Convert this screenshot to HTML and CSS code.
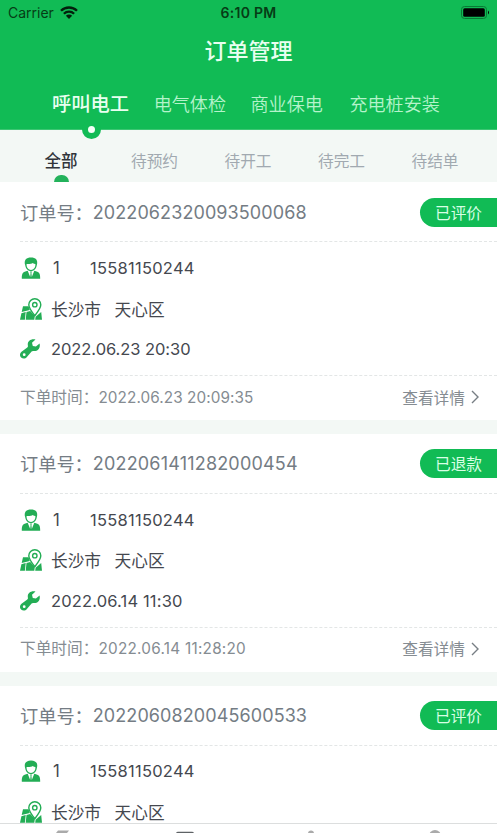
FILE: index.html
```html
<!DOCTYPE html>
<html lang="zh-CN">
<head>
<meta charset="utf-8">
<title>订单管理</title>
<link rel="stylesheet" href="styles.css">
</head>
<body>
<svg class="defs" aria-hidden="true">
  <symbol id="person" viewBox="0 0 20 22">
    <path d="M4.200 8.200C2.600 2.800 5.500.400 10 .400s7.400 2.400 5.800 7.800C15.300 12 12.700 14 10 14S4.700 12 4.200 8.200Z"/>
    <path class="hole" d="M5.600 7c2.800.200 5.200-.300 6.200-1 .6.500 1.500.900 2.600 1 .3 3.700-1.900 5.900-4.400 5.900S5.300 10.700 5.600 7Z"/>
    <path d="M.800 21.700c0-5.700 1-6.600 5.900-7.900L9.200 20l.4-4.300-.6-1.200h2l-.6 1.200.4 4.300 2.500-6.200c4.900 1.300 5.900 2.200 5.900 7.900Z"/>
  </symbol>
  <symbol id="map" viewBox="0 0 22 22">
    <path d="M3 8.200h5.500l1.300 3.800-8.100 2.100ZM1.400 15.200l4.300-1.100-.8 7.700H0ZM6.500 13.900l3.700-1 4.600 5.200-.5 3.700H5.700ZM15.600 18.700l5.600-4.700.8 7.800h-6.800Z"/>
    <path class="pin" d="M14.800 17.700C11.500 13.500 8.800 10.200 8.800 6.800a6 6 0 0 1 12 0c0 3.400-2.700 6.700-6 10.900Z"/>
    <circle class="pin" cx="14.800" cy="6.700" r="2.200"/>
  </symbol>
  <symbol id="wrench" viewBox="0 0 20 20">
    <path fill-rule="evenodd" d="M15.500.5C10.500-.6 7 2.600 7.900 6.700c.2.800 0 1.200-.6 1.700L1.500 12.800c-1.900 1.500-2 4.100-.4 5.700s4.300 1.500 5.800-.4l4.700-5.500c.5-.6 1-.8 1.800-.7 4.300.6 7.200-2.600 6.200-7.300l-3.700 3-3.100-.7-.8-3.200ZM4.200 14.300a1.400 1.400 0 1 1 0 2.800 1.400 1.400 0 0 1 0-2.800Z"/>
  </symbol>
</svg>
<div class="app">
  <header class="top">
    <div class="status">
      <span class="carrier">Carrier</span>
      <svg class="wifi" viewBox="0 0 18 13"><path d="M1 4.800a11.300 11.300 0 0 1 16 0M3.900 7.700a7.200 7.200 0 0 1 10.200 0"/><path class="dot" d="M5.900 9.800a4.400 4.400 0 0 1 6.200 0L9 13Z"/></svg>
      <span class="clock">6:10 PM</span>
      <svg class="battery" viewBox="0 0 29 13"><rect class="shell" x=".5" y=".5" width="25" height="12" rx="3"/><rect x="2.200" y="2.200" width="21.600" height="8.600" rx="1.500"/><path d="M27 4.500q2 2 0 4Z"/></svg>
    </div>
    <h1>订单管理</h1>
    <nav class="kinds"><span class="on">呼叫电工</span><span>电气体检</span><span>商业保电</span><span>充电桩安装</span></nav>
  </header>
  <nav class="states"><span class="on">全部</span><span>待预约</span><span>待开工</span><span>待完工</span><span>待结单</span></nav>
  <main>
    <article class="card">
      <div class="head"><span class="label">订单号：</span><span class="no">2022062320093500068</span><span class="badge">已评价</span></div>
      <div class="info">
        <div class="row"><svg><use href="#person"/></svg><span class="who">1</span><span class="num">15581150244</span></div>
        <div class="row"><svg><use href="#map"/></svg><span class="city">长沙市</span><span>天心区</span></div>
        <div class="row"><svg class="tool"><use href="#wrench"/></svg><span class="num tight">2022.06.23 20:30</span></div>
      </div>
      <div class="foot"><span class="label">下单时间：</span><span class="time">2022.06.23 20:09:35</span><span class="more">查看详情</span><svg viewBox="0 0 8 14"><path d="m1 1 6 6-6 6"/></svg></div>
    </article>
    <article class="card">
      <div class="head"><span class="label">订单号：</span><span class="no wide">2022061411282000454</span><span class="badge">已退款</span></div>
      <div class="info">
        <div class="row"><svg><use href="#person"/></svg><span class="who">1</span><span class="num">15581150244</span></div>
        <div class="row"><svg><use href="#map"/></svg><span class="city">长沙市</span><span>天心区</span></div>
        <div class="row"><svg class="tool"><use href="#wrench"/></svg><span class="num">2022.06.14 11:30</span></div>
      </div>
      <div class="foot"><span class="label">下单时间：</span><span class="time wide">2022.06.14 11:28:20</span><span class="more">查看详情</span><svg viewBox="0 0 8 14"><path d="m1 1 6 6-6 6"/></svg></div>
    </article>
    <article class="card">
      <div class="head"><span class="label">订单号：</span><span class="no">2022060820045600533</span><span class="badge">已评价</span></div>
      <div class="info">
        <div class="row"><svg><use href="#person"/></svg><span class="who">1</span><span class="num">15581150244</span></div>
        <div class="row"><svg><use href="#map"/></svg><span class="city">长沙市</span><span>天心区</span></div>
      </div>
    </article>
  </main>
  <footer class="tabbar">
    <svg viewBox="0 0 20 9"><path d="M6 6.500h11L15 9H4Z"/></svg>
    <svg class="current" viewBox="0 0 20 9"><rect x="1" y="7.800" width="18" height="8" rx="2"/></svg>
    <svg viewBox="0 0 20 9"><circle cx="10" cy="9.500" r="3"/></svg>
    <svg viewBox="0 0 20 9"><circle cx="10" cy="12" r="6"/></svg>
  </footer>
</div>
</body>
</html>
```
FILE: styles.css
```css
*, *::after { box-sizing: border-box; }
body { margin: 0; font-family: Inter, "Noto Sans CJK SC", sans-serif; color: #45484f; background: #fff; }
.defs { position: absolute; width: 0; height: 0; }
.app { height: 833px; overflow: hidden; display: flex; flex-direction: column; }
.top { height: 130px; flex: none; background: #11bb55; border-bottom: 1px solid #3cc673; display: flex; flex-direction: column; }
.status { height: 26px; display: grid; grid-template-columns: auto auto 1fr auto; align-items: center; padding: 0 8px; color: #063d16; font-size: 14px; position: relative; }
.carrier { margin-top: -1px; }
.wifi { width: 18px; height: 13px; margin-left: 6px; margin-top: -2px; fill: none; stroke: #03200c; stroke-width: 2.300; }
.wifi .dot { fill: #03200c; stroke: none; }
.clock { position: absolute; left: 0; right: 0; top: 4px; text-align: center; font-weight: 600; font-size: 14px; letter-spacing: .3px; }
.battery { width: 29px; height: 13px; grid-column: 4; margin-right: -1px; margin-top: -2px; fill: #000; }
.battery .shell { fill: none; stroke: #087a35; }
h1 { margin: 0; height: 48px; line-height: 50px; text-align: center; color: #e9fff0; font-size: 22px; font-weight: 500; }
.kinds { display: flex; align-items: center; gap: 24.500px; height: 55px; padding: 2px 0 0 52px; color: #b5f3cb; font-size: 18.100px; font-weight: 350; white-space: nowrap; }
.kinds .on { font-size: 19.300px; font-weight: 500; color: #e9fff0; position: relative; }
.kinds span:last-child { margin-left: 2px; }
.kinds .on::after { content: ""; position: absolute; left: 30px; top: 31px; width: 19px; height: 19px; border-radius: 50%; border: 6px solid #11bb55; background: #f4fff8; }
.states { height: 52px; flex: none; background: #f3f8f5; display: grid; grid-template-columns: repeat(5, 93.500px); justify-content: center; align-items: center; padding: 8px 1px 0 0; text-align: center; font-size: 15.700px; color: #a1a9b0; }
.states .on { font-size: 16.500px; font-weight: 500; color: #30343a; position: relative; }
.states .on::after { content: ""; position: absolute; left: 40px; bottom: -10px; width: 15px; height: 7px; border-radius: 8px 8px 0 0; background: #23b25b; }
main { flex: 1; min-height: 0; overflow: hidden; background: #f3f8f5; display: flex; flex-direction: column; gap: 14px; }
.card { height: 237.800px; flex: none; background: #fff; padding-left: 20px; }
.head { height: 60px; border-bottom: 1px dashed #e3e6e6; display: flex; align-items: center; padding-top: 1px; font-size: 18.200px; color: #747c84; }
.label { font-family: "Noto Sans CJK SC", sans-serif; line-height: 22px; margin-top: -1px; }
.no { font-size: 18px; letter-spacing: .09px; }
.no.wide { letter-spacing: .19px; }
.badge { margin-left: auto; width: 77px; height: 29px; line-height: 29px; border-radius: 15px 0 0 15px; background: #11bb55; color: #d8ffe5; font-family: "Noto Sans CJK SC", sans-serif; font-size: 15.700px; padding-left: 15px; }
.info { height: 134px; border-bottom: 1px dashed #e3e6e6; padding-top: 6px; }
.row { height: 40.700px; display: flex; align-items: center; font-size: 16.700px; padding-bottom: 1px; }
.row svg { width: 22px; height: 22px; margin-right: 9px; fill: #23ad55; flex: none; }
.row svg.tool { height: 20px; width: 20px; margin-right: 11px; }
.hole { fill: #fff; }
.pin { fill: #fff; stroke: #23ad55; stroke-width: 1.400; }
.num { font-size: 16.500px; letter-spacing: .15px; }
.num.tight { letter-spacing: -.06px; }
.who + .num { letter-spacing: .25px; }
.who { width: 39px; padding-left: 2px; }
.city { margin-right: 13.500px; }
.foot { height: 42px; display: flex; align-items: center; font-size: 15.700px; color: #858c92; }
.time { font-size: 15.300px; letter-spacing: .08px; }
.time.wide { letter-spacing: .25px; }
.more { margin-left: auto; }
.foot svg { width: 8px; height: 14px; margin: 0 18px 0 6px; fill: none; stroke: #777e84; stroke-width: 1.400; }
.tabbar { flex: none; height: 10px; border-top: 1px solid #dcdede; background: #fff; display: grid; grid-template-columns: repeat(4, 1fr); justify-items: center; fill: #aaa; }
.tabbar svg { width: 20px; height: 9px; overflow: hidden; }
.tabbar .current { fill: #5e6265; margin-left: -3px; }
```
